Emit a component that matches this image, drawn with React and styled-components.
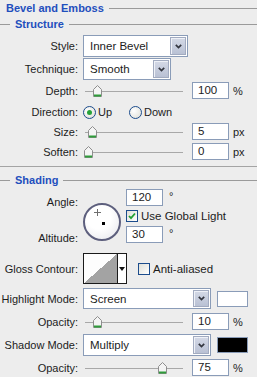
import React from 'react'
import styled, { createGlobalStyle } from 'styled-components'

const GlobalStyle = createGlobalStyle`
  body {
    margin: 0;
    background: #ededed;
  }
`

const Panel = styled.div`
  width: 257px;
  height: 377px;
  overflow: hidden;
  background: #ededed;
  font-family: 'Liberation Sans', Arial, sans-serif;
  font-size: 11px;
  color: #1c1c1c;
`

const TitleRow = styled.div`
  height: 16px;
  display: flex;
  align-items: center;
  padding-left: ${(p) => (p.$sub ? '0' : '6px')};
  gap: 5px;
`

const Lead = styled.div`
  width: 10px;
  height: 1px;
  background: #9a9a9a;
`

const Title = styled.span`
  font-weight: 700;
  font-size: 11px;
  color: #1f4fbd;
  white-space: nowrap;
`

const Rule = styled.div`
  flex: 1;
  height: 1px;
  background: #9a9a9a;
`

const Separator = styled.div`
  height: 1px;
  background: #a4a4a4;
  margin: 5px 0 5px;
`

const Row = styled.div`
  height: ${(p) => p.$h}px;
  margin-top: ${(p) => p.$mt || 0}px;
  display: flex;
  align-items: center;
`

const Label = styled.span`
  width: 78px;
  flex: none;
  text-align: right;
  margin-right: 5px;
  white-space: nowrap;
`

const Select = styled.div`
  width: ${(p) => p.$w}px;
  height: ${(p) => p.$h || 22}px;
  box-sizing: border-box;
  border: 1px solid #8a9cb8;
  background: #fff;
  display: flex;
  align-items: stretch;
  padding: 1px;
  flex: none;
`

const SelectText = styled.span`
  flex: 1;
  display: flex;
  align-items: center;
  padding-left: 5px;
  font-size: 11.5px;
`

const ArrowBtn = styled.span`
  width: 14px;
  display: flex;
  align-items: center;
  justify-content: center;
  background: linear-gradient(#d4d9e6, #b9c1d4);
  border: 1px solid #a2abc0;
  box-shadow: inset 1px 1px 0 #eef1f7;
`

const Chevron = () => (
  <svg width="7" height="5" viewBox="0 0 7 5">
    <path d="M0.8 0.8 L3.5 3.6 L6.2 0.8" fill="none" stroke="#33363f" strokeWidth="1.7" />
  </svg>
)

const Track = styled.div`
  position: relative;
  width: 98px;
  height: 12px;
  margin-left: 2px;
  flex: none;
`

const Line = styled.div`
  position: absolute;
  left: 0;
  right: 0;
  top: 6px;
  height: 1px;
  background: #a8a8a8;
`

const ThumbWrap = styled.span`
  position: absolute;
  top: 0;
  left: ${(p) => p.$pos}px;
  display: flex;
`

const Thumb = () => (
  <svg width="9" height="12" viewBox="0 0 9 12">
    <path d="M0.5 4.5 L4.5 0.5 L8.5 4.5 L8.5 11.5 L0.5 11.5 Z" fill="#f4f4f4" stroke="#8e8e8e" />
    <rect x="1" y="9.5" width="7" height="2" fill="#2f9c3a" />
  </svg>
)

const Slider = ({ pos }) => (
  <Track>
    <Line />
    <ThumbWrap $pos={pos}>
      <Thumb />
    </ThumbWrap>
  </Track>
)

const Field = styled.div`
  display: block;
  width: 37px;
  height: 17px;
  box-sizing: border-box;
  border: 1px solid #8a9cb8;
  background: #fff;
  margin-left: ${(p) => p.$ml ?? 9}px;
  padding: 0 0 0 5px;
  line-height: 15px;
  text-align: left;
  font-size: 11.5px;
  flex: none;
`

const Unit = styled.span`
  margin-left: ${(p) => p.$ml ?? 4}px;
  font-size: 11px;
  align-self: ${(p) => (p.$top ? 'flex-start' : 'center')};
`

const Radio = styled.span`
  width: 13px;
  height: 13px;
  flex: none;
  box-sizing: border-box;
  border-radius: 50%;
  border: 1px solid #1c4c8c;
  background: radial-gradient(circle at 35% 35%, #fff, #dcdcd4);
  display: flex;
  align-items: center;
  justify-content: center;
  margin-left: ${(p) => p.$ml || 0}px;
  margin-right: 2px;

  &::after {
    content: '';
    width: 5px;
    height: 5px;
    border-radius: 50%;
    background: ${(p) => (p.$on ? '#27a33a' : 'transparent')};
  }
`

const Check = styled.span`
  width: 12px;
  height: 12px;
  box-sizing: border-box;
  border: 1px solid #1c4c8c;
  background: linear-gradient(135deg, #e0e0d8, #fff);
  display: flex;
  align-items: center;
  justify-content: center;
  margin-right: 3px;
  flex: none;
`

const Tick = () => (
  <svg width="8" height="8" viewBox="0 0 8 8">
    <path d="M1 4 L3 6.2 L7 1.5" fill="none" stroke="#23a034" strokeWidth="1.8" />
  </svg>
)

const AngleBlock = styled.div`
  display: grid;
  grid-template-columns: 78px 38px auto;
  column-gap: 5px;
  margin-top: 2px;
  height: 57px;
`

const AngleLabels = styled.div`
  display: flex;
  flex-direction: column;
  justify-content: space-between;
  text-align: right;
  padding: 6px 0 3px;
`

const Dial = styled.div`
  align-self: center;
  margin-top: 6px;
  width: 38px;
  height: 38px;
  box-sizing: border-box;
  border-radius: 50%;
  border: 2px solid #5d5f7d;
  background: radial-gradient(circle at 40% 35%, #ffffff 40%, #e4e4ea);
  position: relative;
`

const Cross = styled.span`
  position: absolute;
  left: 9px;
  top: 4px;
  width: 7px;
  height: 7px;
  background:
    linear-gradient(#333, #333) center / 7px 1px no-repeat,
    linear-gradient(#333, #333) center / 1px 7px no-repeat;
  opacity: 0.7;
`

const Dot = styled.span`
  position: absolute;
  left: 17px;
  top: 17px;
  width: 3px;
  height: 3px;
  background: #000;
`

const AngleControls = styled.div`
  display: flex;
  flex-direction: column;
  gap: 4px;
`

const Inline = styled.div`
  display: flex;
  align-items: center;
  height: ${(p) => p.$h}px;
`

const Contour = styled.div`
  width: 44px;
  height: 31px;
  box-sizing: border-box;
  border: 1px solid #1a1a1a;
  display: flex;
  background: #fff;
  flex: none;
`

const ContourPreview = styled.div`
  width: 33px;
  border-right: 1px solid #1a1a1a;
  background: linear-gradient(to top left, #a3a3a3 50%, #fdfdfd 50%);
`

const ContourArrow = styled.div`
  flex: 1;
  display: flex;
  align-items: center;
  justify-content: center;

  &::after {
    content: '';
    border-left: 3px solid transparent;
    border-right: 3px solid transparent;
    border-top: 4px solid #111;
  }
`

const CheckLabel = styled.label`
  display: flex;
  align-items: center;
  margin-left: ${(p) => p.$ml || 0}px;
  font-size: 11.5px;
  white-space: nowrap;
`

const Swatch = styled.div`
  width: 31px;
  height: 16px;
  box-sizing: border-box;
  border: 1px solid #8a9cb8;
  background: ${(p) => p.$color};
  margin-left: 6px;
  flex: none;
`

function DropSelect({ w, h, value }) {
  return (
    <Select $w={w} $h={h}>
      <SelectText>{value}</SelectText>
      <ArrowBtn>
        <Chevron />
      </ArrowBtn>
    </Select>
  )
}

function SliderRow({ label, pos, value, unit, h = 19, mt = 0 }) {
  return (
    <Row $h={h} $mt={mt}>
      <Label>{label}</Label>
      <Slider pos={pos} />
      <Field>{value}</Field>
      <Unit>{unit}</Unit>
    </Row>
  )
}

export default function App() {
  return (
    <Panel>
      <GlobalStyle />
      <TitleRow>
        <Title>Bevel and Emboss</Title>
        <Rule />
      </TitleRow>
      <TitleRow $sub>
        <Lead />
        <Title>Structure</Title>
        <Rule />
      </TitleRow>

      <Row $h={22} $mt={3}>
        <Label>Style:</Label>
        <DropSelect w={105} value="Inner Bevel" />
      </Row>
      <Row $h={22} $mt={1}>
        <Label>Technique:</Label>
        <DropSelect w={88} value="Smooth" />
      </Row>
      <SliderRow label="Depth:" pos={8} value="100" unit="%" mt={1} />
      <Row $h={20} $mt={2}>
        <Label>Direction:</Label>
        <Radio $on />
        <span>Up</span>
        <Radio $ml={17} />
        <span>Down</span>
      </Row>
      <SliderRow label="Size:" pos={3} value="5" unit="px" />
      <SliderRow label="Soften:" pos={-1} value="0" unit="px" mt={1} />

      <Separator />
      <TitleRow $sub>
        <Lead />
        <Title>Shading</Title>
        <Rule />
      </TitleRow>

      <AngleBlock>
        <AngleLabels>
          <span>Angle:</span>
          <span>Altitude:</span>
        </AngleLabels>
        <Dial>
          <Cross />
          <Dot />
        </Dial>
        <AngleControls>
          <Inline $h={15}>
            <Field $ml={0}>120</Field>
            <Unit $ml={6} $top>°</Unit>
          </Inline>
          <Inline $h={14}>
            <CheckLabel>
              <Check>
                <Tick />
              </Check>
              Use Global Light
            </CheckLabel>
          </Inline>
          <Inline $h={15}>
            <Field $ml={0}>30</Field>
            <Unit $ml={6} $top>°</Unit>
          </Inline>
        </AngleControls>
      </AngleBlock>

      <Row $h={31} $mt={6}>
        <Label>Gloss Contour:</Label>
        <Contour>
          <ContourPreview />
          <ContourArrow />
        </Contour>
        <CheckLabel $ml={11}>
          <Check />
          Anti-aliased
        </CheckLabel>
      </Row>

      <Row $h={21} $mt={4}>
        <Label>Highlight Mode:</Label>
        <DropSelect w={128} h={21} value="Screen" />
        <Swatch $color="#ffffff" />
      </Row>
      <SliderRow label="Opacity:" pos={8} value="10" unit="%" h={17} mt={4} />
      <Row $h={22} $mt={4}>
        <Label>Shadow Mode:</Label>
        <DropSelect w={128} value="Multiply" />
        <Swatch $color="#000000" />
      </Row>
      <SliderRow label="Opacity:" pos={73} value="75" unit="%" h={17} mt={3} />
    </Panel>
  )
}
